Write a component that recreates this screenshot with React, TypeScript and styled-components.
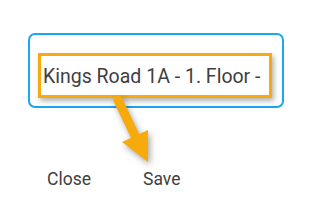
import styled, { createGlobalStyle } from 'styled-components';

const GlobalStyle = createGlobalStyle`
  html, body {
    margin: 0;
    padding: 0;
    background: #fff;
  }
  body {
    font-family: Roboto, "Liberation Sans", Arial, sans-serif;
  }
`;

const Page = styled.div`
  position: relative;
  width: 312px;
  height: 223px;
  padding: 33px 0 0 28px;
  box-sizing: border-box;
  overflow: hidden;
`;

const Field = styled.div`
  width: 256px;
  height: 75px;
  box-sizing: border-box;
  border: 2px solid #1ba6ef;
  border-radius: 7px;
  padding: 18px 10px 8px 8px;
`;

const Highlight = styled.div`
  height: 45px;
  box-sizing: border-box;
  border: 3px solid #f6aa0b;
  box-shadow: 2px 3px 5px rgba(0, 0, 0, 0.3);
  display: flex;
  align-items: center;
  padding-left: 2px;
  padding-top: 1px;
  overflow: hidden;
  white-space: nowrap;
`;

const Value = styled.span`
  font-size: 19.5px;
  color: #404040;
`;

const Actions = styled.div`
  display: flex;
  margin-top: 60px;
  margin-left: 19px;
`;

const Action = styled.button<{ $width: number }>`
  all: unset;
  width: ${(p) => p.$width}px;
  font-family: Roboto, "Liberation Sans", Arial, sans-serif;
  font-size: 17.5px;
  color: #404040;
  line-height: 22px;
  cursor: pointer;
`;

const Arrow = styled.svg`
  position: absolute;
  left: 100px;
  top: 90px;
  overflow: visible;
  filter: drop-shadow(2px 3px 3px rgba(0, 0, 0, 0.35));
`;

export default function App() {
  return (
    <>
      <GlobalStyle />
      <Page>
        <Field>
          <Highlight>
            <Value>Kings Road 1A - 1. Floor -</Value>
          </Highlight>
        </Field>
        <Actions>
          <Action $width={96}>Close</Action>
          <Action $width={60}>Save</Action>
        </Actions>
        <Arrow width="60" height="80" viewBox="0 0 60 80">
          <line x1="18" y1="10" x2="37" y2="50" stroke="#f6aa0b" strokeWidth="9" strokeLinecap="round" />
          <polygon points="22,52 48,40 48,72" fill="#f6aa0b" />
        </Arrow>
      </Page>
    </>
  );
}
